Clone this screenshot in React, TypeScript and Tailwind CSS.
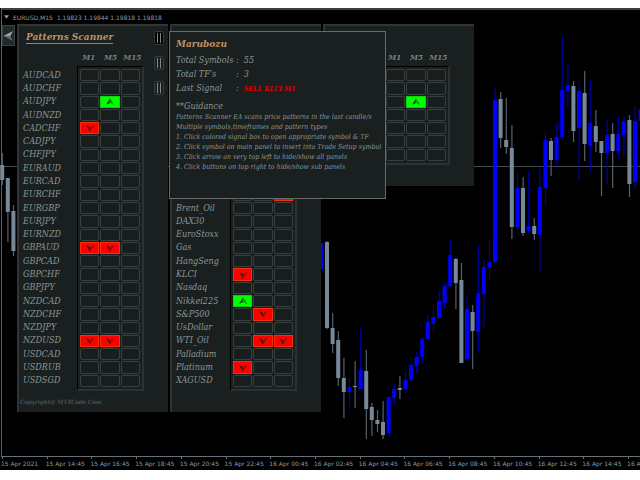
import clsx from "clsx";

type Signal = "buy" | "sell";

interface SymbolRow {
  name: string;
  signals?: (Signal | null)[];
}

// [slot, high, body top, body bottom, low, rising]
type Candle = [number, number, number, number, number, boolean];

const TIMEFRAMES = ["M1", "M5", "M15"];

const FOREX: SymbolRow[] = [
  { name: "AUDCAD" },
  { name: "AUDCHF" },
  { name: "AUDJPY", signals: [null, "buy", null] },
  { name: "AUDNZD" },
  { name: "CADCHF", signals: ["sell", null, null] },
  { name: "CADJPY" },
  { name: "CHFJPY" },
  { name: "EURAUD" },
  { name: "EURCAD" },
  { name: "EURCHF" },
  { name: "EURGBP" },
  { name: "EURJPY" },
  { name: "EURNZD" },
  { name: "GBPAUD", signals: ["sell", "sell", null] },
  { name: "GBPCAD" },
  { name: "GBPCHF" },
  { name: "GBPJPY" },
  { name: "NZDCAD" },
  { name: "NZDCHF" },
  { name: "NZDJPY" },
  { name: "NZDUSD", signals: ["sell", "sell", null] },
  { name: "USDCAD" },
  { name: "USDRUB" },
  { name: "USDSGD" },
];

const emptyRows = (count: number): SymbolRow[] => Array.from({ length: count }, () => ({ name: "" }));

const INDICES: SymbolRow[] = [
  ...emptyRows(9),
  { name: "", signals: [null, null, "sell"] },
  { name: "Brent_Oil" },
  { name: "DAX30" },
  { name: "EuroStoxx" },
  { name: "Gas" },
  { name: "HangSeng" },
  { name: "KLCI", signals: ["sell", null, null] },
  { name: "Nasdaq" },
  { name: "Nikkei225", signals: ["buy", null, null] },
  { name: "S&P500", signals: [null, "sell", null] },
  { name: "UsDollar" },
  { name: "WTI_Oil", signals: [null, "sell", "sell"] },
  { name: "Palladium" },
  { name: "Platinum", signals: ["sell", null, null] },
  { name: "XAGUSD" },
];

const EXTRA: SymbolRow[] = [
  ...emptyRows(2),
  { name: "", signals: [null, "buy", null] },
  ...emptyRows(4),
];

const GUIDANCE = [
  "Patterns Scanner EA scans price patterns in the last candle/s",
  "Multiple symbols,timeframes and pattern types",
  "1. Click colored signal box to open appropriate symbol & TF",
  "2. Click symbol on main panel to insert into Trade Setup symbol",
  "3. Click arrow on very top left to hide/show all panels",
  "4. Click buttons on top right to hide/show sub panels",
];

const TIMES = [
  "15 Apr 2021",
  "15 Apr 14:45",
  "15 Apr 16:45",
  "15 Apr 18:45",
  "15 Apr 20:45",
  "15 Apr 22:45",
  "16 Apr 00:45",
  "16 Apr 02:45",
  "16 Apr 04:45",
  "16 Apr 06:45",
  "16 Apr 08:45",
  "16 Apr 10:45",
  "16 Apr 12:45",
  "16 Apr 14:45",
  "16 Apr 16:45",
];

const CANDLES: Candle[] = [
  [-58, 153, 165, 180, 185, false],
  [-57, 178, 178, 212, 242, false],
  [-56, 205, 211, 251, 256, false],
  [-1, 243, 243, 269, 269, true],
  [0, 241, 242, 328, 329, false],
  [1, 313, 328, 344, 353, false],
  [2, 331, 340, 378, 386, false],
  [3, 358, 378, 392, 418, false],
  [4, 377, 387, 392, 407, true],
  [5, 361, 386, 387, 408, false],
  [6, 328, 370, 389, 389, true],
  [7, 350, 371, 409, 439, false],
  [8, 403, 407, 420, 436, false],
  [9, 410, 420, 424, 432, false],
  [10, 401, 422, 435, 439, false],
  [11, 397, 397, 433, 435, true],
  [12, 383, 389, 398, 405, true],
  [13, 376, 388, 390, 399, false],
  [14, 371, 380, 389, 393, true],
  [15, 362, 365, 380, 384, true],
  [16, 352, 357, 366, 374, true],
  [17, 337, 339, 357, 363, true],
  [18, 315, 322, 339, 340, true],
  [19, 305, 317, 324, 332, true],
  [20, 291, 301, 318, 319, true],
  [21, 282, 286, 303, 309, true],
  [22, 239, 255, 286, 287, true],
  [23, 258, 259, 283, 309, false],
  [24, 263, 280, 363, 363, false],
  [25, 295, 309, 359, 361, true],
  [26, 305, 312, 331, 369, false],
  [27, 246, 293, 332, 351, true],
  [28, 260, 267, 294, 328, true],
  [29, 239, 262, 267, 280, true],
  [30, 88, 100, 262, 264, true],
  [31, 92, 99, 138, 148, false],
  [32, 98, 140, 147, 154, false],
  [33, 125, 148, 227, 239, false],
  [34, 172, 188, 227, 230, true],
  [35, 177, 188, 233, 236, false],
  [36, 172, 226, 231, 233, true],
  [37, 218, 226, 234, 240, false],
  [38, 169, 187, 235, 271, true],
  [39, 132, 140, 188, 205, true],
  [40, 138, 141, 160, 176, false],
  [41, 122, 137, 160, 165, true],
  [42, 37, 90, 137, 138, true],
  [43, 63, 85, 91, 107, true],
  [44, 81, 86, 131, 142, false],
  [45, 81, 91, 128, 180, true],
  [46, 71, 93, 144, 161, false],
  [47, 79, 123, 146, 172, true],
  [48, 110, 126, 142, 152, false],
  [49, 141, 141, 153, 196, false],
  [50, 119, 135, 153, 184, true],
  [51, 123, 134, 151, 188, false],
  [52, 116, 134, 151, 157, true],
  [53, 116, 121, 135, 156, true],
  [54, 115, 120, 184, 197, false],
  [55, 107, 121, 182, 189, true],
  [56, 100, 109, 121, 125, true],
];

function PriceChart() {
  return (
    <svg
      className="absolute inset-0 w-full h-full"
      viewBox="0 8 640 448"
      preserveAspectRatio="none"
      aria-hidden="true"
    >
      <path d="M0 166.5H640" stroke="#3f4a52" />
      {CANDLES.map(([slot, high, top, bottom, low, rising]) => {
        const x = 327 + slot * 5.6;
        return (
          <g key={slot}>
            <rect x={x - 0.5} y={high} width={1.2} height={low - high} fill={rising ? "#0000a8" : "#56626c"} />
            <rect x={x - 2} y={top} width={4} height={bottom - top} fill={rising ? "#0000ff" : "#778899"} />
          </g>
        );
      })}
    </svg>
  );
}

function SignalArrow({ signal }: { signal: Signal }) {
  return (
    <svg viewBox="0 0 10 8" className={clsx("w-[10px] h-2", signal === "sell" && "-scale-y-100")} aria-hidden="true">
      <path d="M4.9 0.4L1.2 7L4.8 5Z" fill="#10200c" fillOpacity="0.9" />
      <path d="M4.9 0.4L8.8 7L4.8 5Z" fill="#10200c" fillOpacity="0.3" />
      <path d="M4.9 0.6L8.7 7" fill="none" stroke="#10200c" strokeOpacity="0.6" strokeWidth="0.7" />
    </svg>
  );
}

function SignalCell({ label, signal }: { label: string; signal?: Signal | null }) {
  return (
    <button
      type="button"
      aria-label={label}
      className={clsx(
        "flex items-center justify-center min-h-0 border",
        !signal && "rounded-xs border-[#383f3f] bg-[#181d1d]",
        signal === "buy" && "border-[#12d00e] bg-[#00ff00]",
        signal === "sell" && "border-[#f0330c] bg-[#ff0000]"
      )}
    >
      {signal && <SignalArrow signal={signal} />}
    </button>
  );
}

interface ScannerPanelProps {
  title?: string;
  footer?: string;
  rows: SymbolRow[];
  headings?: string[];
  short?: boolean;
}

function ScannerPanel({ title, footer, rows, headings = [], short }: ScannerPanelProps) {
  return (
    <section className="relative shrink-0 w-[151px] border-l-2 border-t-2 border-[#303434] bg-[#1a1f1f]">
      <header className="flex items-start h-6 pl-[7px] pt-1">
        {title && (
          <h1 className="border-b border-[#a87c50] text-[10px] leading-[13px] font-bold text-[#bd9263] whitespace-nowrap">
            {title}
          </h1>
        )}
      </header>

      <div className="grid grid-cols-3 w-[65px] h-4 ml-[59px] text-center text-[8px] leading-[14px] font-bold text-[#76827f]">
        {headings.map((tf) => (
          <span key={tf}>{tf}</span>
        ))}
      </div>

      <div className={clsx("flex pl-1", short ? "h-[99px]" : "h-[325px]")}>
        <div className="grid auto-rows-fr w-[54px] pt-[2px] pb-1 text-[9px] leading-3 text-[#8b9796]">
          {rows.map((row, i) => (
            <span key={i} className="flex items-center">
              {row.name}
            </span>
          ))}
        </div>
        <div className="grid grid-cols-3 auto-rows-fr gap-px w-[67px] p-[2px] border-t border-l border-t-black border-l-black border-r-2 border-b-2 border-r-[#2c3131] border-b-[#2c3131]">
          {rows.map((row, i) =>
            TIMEFRAMES.map((tf, j) => (
              <SignalCell key={`${i}-${tf}`} label={`${row.name} ${tf}`} signal={row.signals?.[j]} />
            ))
          )}
        </div>
      </div>

      <footer className="h-[21px] pl-px text-[6px] leading-[21px] font-bold text-[#4b5252]">{footer}</footer>

      {title && (
        <div className="absolute top-[5px] right-1 flex flex-col gap-[11px]">
          {[1, 2, 3].map((n) => (
            <button
              key={n}
              type="button"
              aria-label={`Toggle sub panel ${n}`}
              className={clsx(
                "flex items-center justify-center gap-[2px] w-[10px] h-[14px] rounded-xs border border-[#353c3c]",
                n === 1 && "bg-black"
              )}
            >
              <span className="w-px h-[10px] bg-[#7d8785]" />
              <span className="w-px h-[10px] bg-[#7d8785]" />
            </button>
          ))}
        </div>
      )}
    </section>
  );
}

function InfoPanel() {
  return (
    <aside className="absolute left-[167px] top-[23px] w-[217px] h-[168px] pl-[6px] pt-1 border border-[#686b6b] bg-[#1a1f1f] text-[#8b9796] whitespace-nowrap">
      <h2 className="text-[10px] leading-4 font-bold text-[#bd9263]">Marubozu</h2>
      <dl className="grid grid-cols-[60px_1fr] mt-px text-[9px] leading-[14px]">
        <dt>Total Symbols</dt>
        <dd>:&nbsp; 55</dd>
        <dt>Total TF's</dt>
        <dd>:&nbsp; 3</dd>
        <dt>Last Signal</dt>
        <dd>
          :&nbsp; <span className="font-bold text-[#e00000] text-[7px]">SELL KLCI M1</span>
        </dd>
      </dl>
      <h3 className="mt-1 text-[9px] leading-3">**Guidance</h3>
      <ul className="text-[7px] leading-[10px]">
        {GUIDANCE.map((line) => (
          <li key={line}>{line}</li>
        ))}
      </ul>
    </aside>
  );
}

export default function App() {
  return (
    <div className="min-h-screen bg-white py-2">
      <main className="overflow-hidden bg-black font-['DejaVu_Sans',sans-serif]">
        {/* Chart window with the scanner on top */}
        <div className="relative ml-px pb-[44px] border-l border-[#56616a]">
          <div className="absolute inset-y-0 -left-[2px] right-0">
            <PriceChart />
          </div>

          <div className="relative flex items-center gap-1 h-4 pl-[2px] border-t-2 border-[#39424a] text-[6px] text-[#8d9aa6] whitespace-nowrap">
            <svg viewBox="0 0 6 4" className="w-[5px] h-1" aria-hidden="true">
              <path d="M0 0H6L3 4Z" fill="#8d9aa6" />
            </svg>
            <span>EURUSD,M15</span>
            <span>1.19823 1.19844 1.19818 1.19818</span>
          </div>

          <div className="relative flex items-start gap-[2px] font-['DejaVu_Serif_Condensed','DejaVu_Serif',serif] italic">
            <button
              type="button"
              aria-label="Hide all panels"
              className="flex items-center justify-center shrink-0 w-[13px] h-[21px] mt-px border border-[#3c4343] bg-[#22292a]"
            >
              <svg viewBox="0 0 11 12" className="w-[11px] h-3" aria-hidden="true">
                <path d="M0.5 6L10 1L7.4 6Z" fill="#9aa5a5" />
                <path d="M0.5 6L10 11L7.4 6Z" fill="#5f6a6a" />
              </svg>
            </button>
            <ScannerPanel
              title="Patterns Scanner"
              footer="Copyright@ MT4Code.Com"
              rows={FOREX}
              headings={TIMEFRAMES}
            />
            <ScannerPanel rows={INDICES} />
            <ScannerPanel rows={EXTRA} headings={TIMEFRAMES} short />
          </div>

          <div className="font-['DejaVu_Serif_Condensed','DejaVu_Serif',serif] italic">
            <InfoPanel />
          </div>
        </div>

        {/* Time axis */}
        <div className="flex h-[14px] ml-px border-t border-[#66717a] text-[6px] leading-[9px] text-[#8d9aa6] whitespace-nowrap">
          {TIMES.map((time) => (
            <div key={time} className="shrink-0 w-[7%]">
              <div className="w-px h-[2px] ml-px bg-[#66717a]" />
              {time}
            </div>
          ))}
        </div>
      </main>
    </div>
  );
}
